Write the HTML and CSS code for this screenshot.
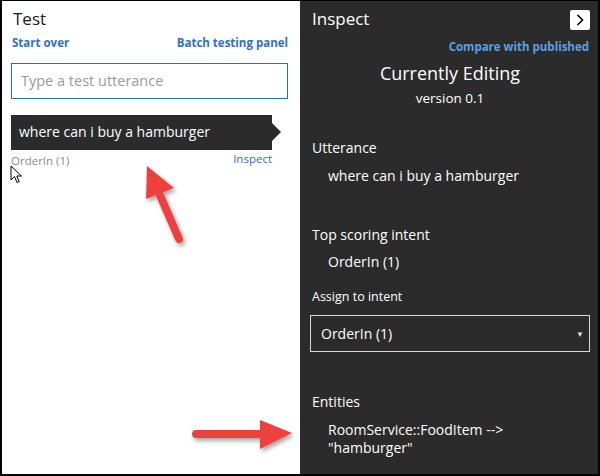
FILE: index.html
```html
<!DOCTYPE html>
<html>
<head>
<meta charset="utf-8">
<link rel="stylesheet" href="styles.css">
</head>
<body>
<div class="frame">
  <section class="left">
    <h1 class="title">Test</h1>
    <div class="links">
      <a class="link">Start over</a>
      <a class="link">Batch testing panel</a>
    </div>
    <div class="input">Type a test utterance</div>
    <div class="utter">where can i buy a hamburger</div>
    <div class="meta">
      <span class="intent">OrderIn (1)</span>
      <a class="inspect">Inspect</a>
    </div>
  </section>
  <section class="right">
    <div class="rhead">
      <h1 class="title light">Inspect</h1>
      <span class="close"><svg width="20" height="20" viewBox="0 0 20 20"><path d="M7.5 5 L12.5 10 L7.5 15" fill="none" stroke="#000" stroke-width="1.6"/></svg></span>
    </div>
    <div class="compare"><a class="rlink">Compare with published</a></div>
    <div class="current">Currently Editing</div>
    <div class="version">version 0.1</div>
    <div class="label utt-label">Utterance</div>
    <div class="value">where can i buy a hamburger</div>
    <div class="label top-label">Top scoring intent</div>
    <div class="value value-tight">OrderIn (1)</div>
    <div class="small-label">Assign to intent</div>
    <div class="select"><span>OrderIn (1)</span><span class="caret">&#9660;</span></div>
    <div class="label ent-label">Entities</div>
    <div class="value">RoomService::FoodItem --&gt;<br>"hamburger"</div>
  </section>
  <svg class="cursor" width="14" height="20" viewBox="0 0 14 20"><path d="M1 1 L1 15 L4.5 11.5 L7 17.5 L9.2 16.5 L6.8 11 L11.5 11 Z" fill="#fff" stroke="#000" stroke-width="1"/></svg>
  <svg class="arrow arrow-up" width="60" height="90" viewBox="0 0 60 90">
    <defs><filter id="sh" x="-30%" y="-30%" width="160%" height="160%"><feDropShadow dx="2" dy="3" stdDeviation="2" flood-color="#000" flood-opacity="0.35"/></filter></defs>
    <g filter="url(#sh)">
      <line x1="42" y1="78" x2="22" y2="32" stroke="#ef4040" stroke-width="8" stroke-linecap="round"/>
      <polygon points="10,5 9,38 37,27" fill="#ef4040"/>
    </g>
  </svg>
  <svg class="arrow arrow-right" width="110" height="40" viewBox="0 0 110 40">
    <defs><filter id="sh2" x="-30%" y="-30%" width="160%" height="160%"><feDropShadow dx="2" dy="3" stdDeviation="2" flood-color="#000" flood-opacity="0.35"/></filter></defs>
    <g filter="url(#sh2)">
      <line x1="6" y1="19" x2="72" y2="19" stroke="#ef4040" stroke-width="8" stroke-linecap="round"/>
      <polygon points="70,5 70,34 102,18" fill="#ef4040"/>
    </g>
  </svg>
</div>
</body>
</html>
```

FILE: styles.css
```css
* { box-sizing: border-box; }
html, body { margin: 0; padding: 0; }
body {
  font-family: "Open Sans", "Noto Sans", sans-serif;
  width: 600px;
  height: 476px;
  overflow: hidden;
}
.frame {
  position: relative;
  width: 600px;
  height: 476px;
  border: 2px solid #000;
  border-top-width: 1px;
  display: flex;
  background: #000;
}
.left {
  width: 298px;
  background: #fff;
  padding: 0 12px 0 9px;
}
.right {
  flex: 1;
  background: #2b2b2b;
  padding: 0 8px 0 10px;
  color: #fff;
}
.title {
  margin: 0;
  font-weight: 400;
  font-size: 17px;
  line-height: 24px;
  padding: 6px 0 0 2px;
  color: #1a1a1a;
}
.title.light { color: #fff; }
.links {
  display: flex;
  justify-content: space-between;
  padding: 5px 0 0 1px;
  font-size: 11.5px;
  font-weight: 700;
  line-height: 14px;
}
.link { color: #2f6fd1; }
.input {
  margin-top: 13px;
  height: 36px;
  border: 1px solid #1a75c9;
  padding: 0 9px;
  font-size: 14.5px;
  line-height: 34px;
  color: #9a9a9a;
}
.utter {
  position: relative;
  margin-top: 16px;
  width: 261px;
  height: 35px;
  background: #2b2b2b;
  color: #fff;
  font-size: 14px;
  line-height: 34px;
  padding-left: 8px;
}
.utter::after {
  content: "";
  position: absolute;
  right: -9px;
  top: 8px;
  border-left: 9px solid #2b2b2b;
  border-top: 9px solid transparent;
  border-bottom: 9px solid transparent;
}
.meta {
  display: flex;
  justify-content: space-between;
  width: 261px;
  font-size: 11.5px;
  line-height: 14px;
}
.intent { color: #8a8a8a; padding-top: 4px; }
.inspect { color: #2f6fd1; padding-top: 2px; }
.rhead {
  display: flex;
  justify-content: space-between;
  align-items: flex-start;
}
.close {
  margin-top: 9px;
  width: 20px;
  height: 20px;
  background: #fff;
  border-radius: 2px;
  display: block;
}
.close svg { display: block; }
.compare {
  text-align: right;
  padding-right: 1px;
  margin-top: 9px;
  font-size: 11.5px;
  font-weight: 700;
  line-height: 14px;
}
.rlink { color: #58a0e6; }
.current {
  text-align: center;
  font-size: 18px;
  line-height: 24px;
  margin-top: 7px;
}
.version {
  text-align: center;
  font-size: 13.5px;
  line-height: 20px;
  margin-top: 3px;
}
.label {
  font-size: 14px;
  line-height: 20px;
  padding-left: 2px;
}
.utt-label { margin-top: 30px; }
.top-label { margin-top: 40px; }
.ent-label { margin-top: 40px; }
.value {
  font-size: 14px;
  line-height: 18px;
  padding-left: 18px;
  margin-top: 9px;
}
.value-tight { margin-top: 8px; }
.small-label {
  font-size: 12.5px;
  line-height: 16px;
  margin-top: 18px;
  padding-left: 2px;
}
.select {
  margin-top: 10px;
  height: 37px;
  border: 1px solid #d8d8d8;
  display: flex;
  justify-content: space-between;
  align-items: center;
  padding: 0 5px 0 10px;
  font-size: 14px;
}
.caret { font-size: 8px; color: #ddd; }
.cursor { position: absolute; left: 8px; top: 164px; }
.arrow { position: absolute; }
.arrow-up { left: 135px; top: 160px; }
.arrow-right { left: 188px; top: 414px; }
```
